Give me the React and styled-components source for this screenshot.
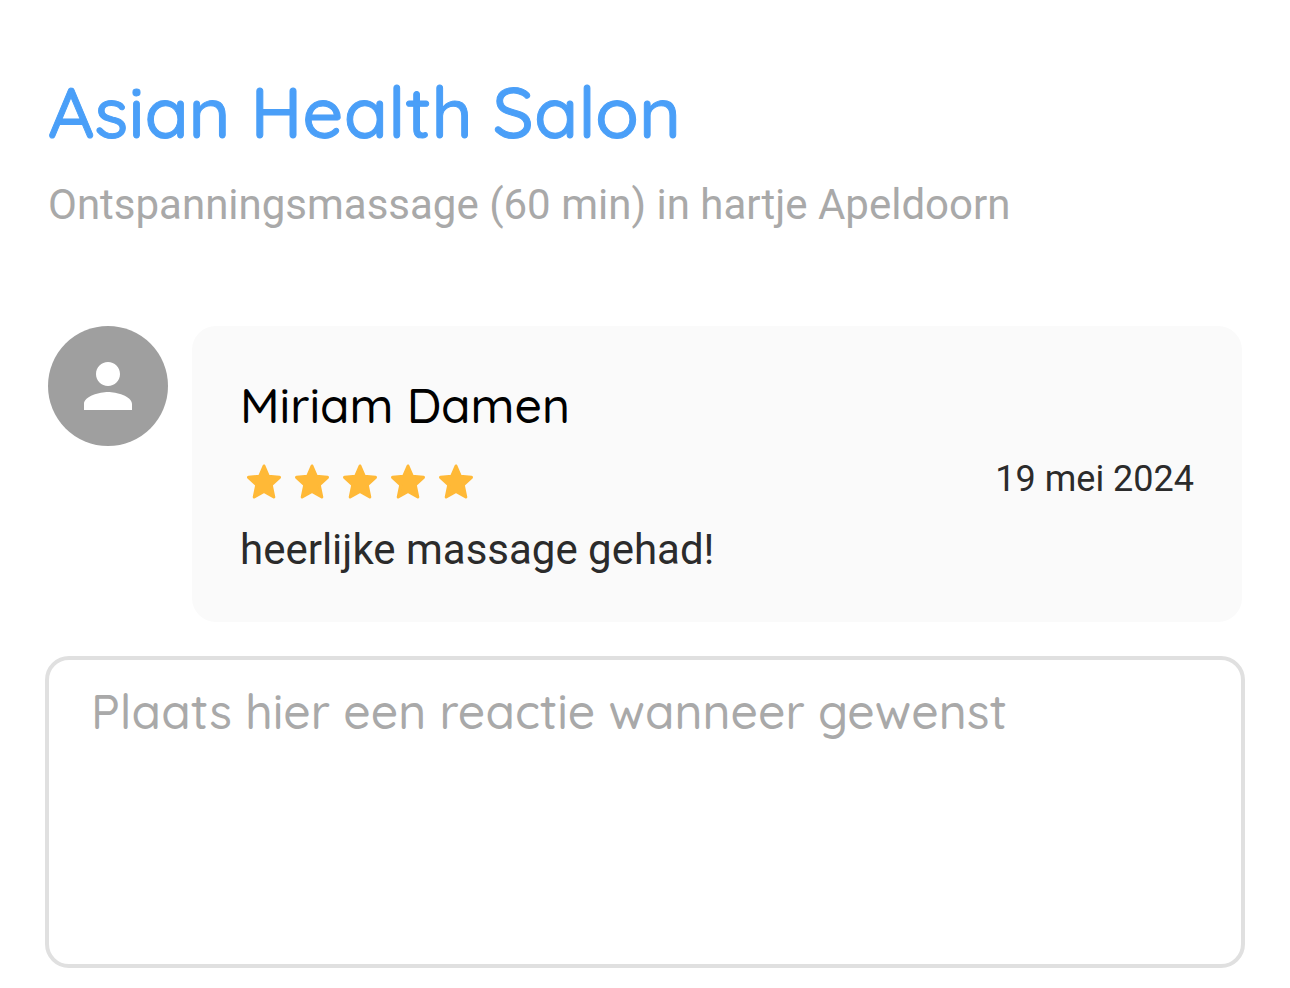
import React from 'react';
import styled, { createGlobalStyle } from 'styled-components';

const GlobalStyle = createGlobalStyle`
    *{
        box-sizing:border-box;
    }
    body{
        margin:0;
        background-color:#fff;
        font-family:Roboto, "Liberation Sans", sans-serif;
    }
`
const Page = styled.main`
    display:flex;
    flex-direction:column;
    padding:68px 48px 20px;
`
const Title = styled.h1`
    margin:0;
    color:#4a9ff8;
    font-family:Quicksand, Lato, sans-serif;
    font-size:72px;
    font-weight:500;
    line-height:86px;
    -webkit-text-stroke:1px currentColor;
`
const Subtitle = styled.p`
    margin:24px 0 0;
    color:#a9a9a9;
    font-size:42px;
    line-height:54px;
`
const Review = styled.article`
    display:flex;
    align-items:flex-start;
    gap:24px;
    margin-top:94px;
`
const Avatar = styled.div`
    display:flex;
    flex:none;
    align-items:center;
    justify-content:center;
    width:120px;
    height:120px;
    border-radius:50%;
    background-color:#9f9f9f;
    color:#fff;
`
const Card = styled.div`
    flex:1;
    padding:48px 48px 46px;
    border-radius:24px;
    background-color:#fafafa;
`
const Name = styled.h2`
    margin:0;
    color:#000;
    font-family:Quicksand, Lato, sans-serif;
    font-size:48px;
    font-weight:500;
    line-height:62px;
`
const Meta = styled.div`
    display:flex;
    align-items:flex-start;
    justify-content:space-between;
    margin-top:20px;
`
const Stars = styled.div`
    display:flex;
`
const ReviewDate = styled.time`
    color:#2b2b2b;
    font-size:36px;
    line-height:46px;
`
const Comment = styled.p`
    margin:20px 0 0;
    color:#2b2b2b;
    font-size:42px;
    line-height:52px;
`
const Reply = styled.textarea`
    height:312px;
    margin:34px -3px 0;
    padding:24px 42px;
    border:4px solid #e0e0e0;
    border-radius:24px;
    outline:none;
    background-color:#fff;
    color:#000;
    font-family:Quicksand, Lato, sans-serif;
    font-size:48px;
    font-weight:500;
    line-height:54px;
    resize:none;
    &::placeholder{
        color:#a9a9a9;
        opacity:1;
    }
`

const Person = () => (
    <svg width="72" height="72" viewBox="0 0 24 24" fill="currentColor" aria-hidden="true">
        <path d="M12 12c2.21 0 4-1.79 4-4s-1.79-4-4-4-4 1.790-4 4 1.790 4 4 4zm0 2c-2.670 0-8 1.340-8 4v2h16v-2c0-2.660-5.330-4-8-4z"/>
    </svg>
)

const Star = () => (
    <svg width="48" height="48" viewBox="0 0 48 48" fill="#ffb937" stroke="#ffb937" strokeWidth="3" strokeLinejoin="round" aria-hidden="true">
        <path d="M24 10L28.300 20.200L39.500 21.300L31.300 29L33.800 41L24 35.500L14.200 41L16.700 29L8.500 21.300L19.700 20.200Z"/>
    </svg>
)

const App = () => {
    return (
        <Page>
            <GlobalStyle/>
            <Title>Asian Health Salon</Title>
            <Subtitle>Ontspanningsmassage (60 min) in hartje Apeldoorn</Subtitle>
            <Review>
                <Avatar><Person/></Avatar>
                <Card>
                    <Name>Miriam Damen</Name>
                    <Meta>
                        <Stars role="img" aria-label="5 van 5 sterren">
                            {[1, 2, 3, 4, 5].map(n => <Star key={n}/>)}
                        </Stars>
                        <ReviewDate dateTime="2024-05-19">19 mei 2024</ReviewDate>
                    </Meta>
                    <Comment>heerlijke massage gehad!</Comment>
                </Card>
            </Review>
            <Reply aria-label="Reactie" placeholder="Plaats hier een reactie wanneer gewenst"/>
        </Page>
    )
}

export default App;
